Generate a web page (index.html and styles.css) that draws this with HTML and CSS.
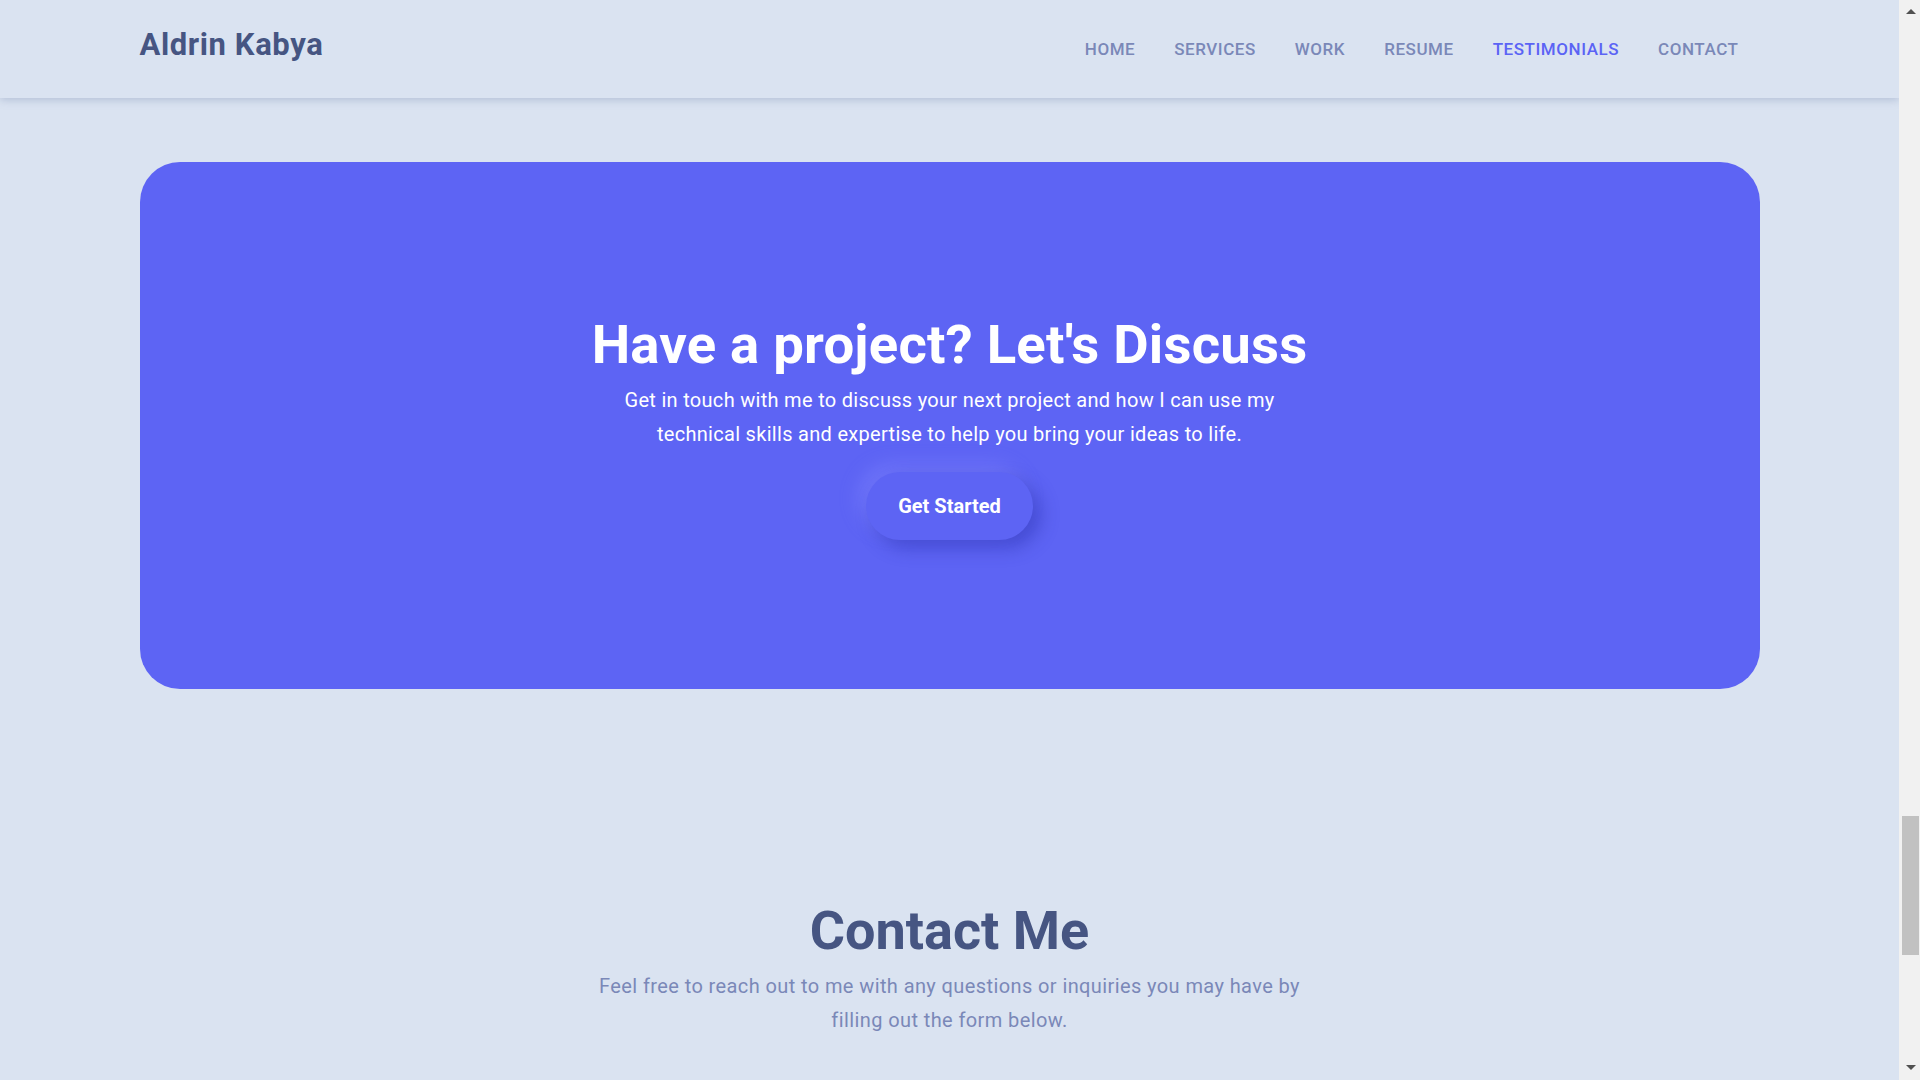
FILE: index.html
```html
<!DOCTYPE html>
<html lang="en">
<head>
<meta charset="utf-8">
<title>Aldrin Kabya</title>
<link rel="stylesheet" href="styles.css">
</head>
<body>
<div class="page">
  <header class="site-header">
    <div class="header-inner">
      <a class="logo" href="#">Aldrin Kabya</a>
      <nav class="nav">
        <a href="#">HOME</a>
        <a href="#">SERVICES</a>
        <a href="#">WORK</a>
        <a href="#">RESUME</a>
        <a href="#" class="active">TESTIMONIALS</a>
        <a href="#">CONTACT</a>
      </nav>
    </div>
  </header>
  <main>
    <section class="cta-section">
      <div class="cta-card">
        <h2 class="cta-title">Have a project? Let's Discuss</h2>
        <p class="cta-text">Get in touch with me to discuss your next project and how I can use my technical skills and expertise to help you bring your ideas to life.</p>
        <a href="#" class="cta-btn">Get Started</a>
      </div>
    </section>
    <section class="contact-section">
      <h2 class="contact-title">Contact Me</h2>
      <p class="contact-text">Feel free to reach out to me with any questions or inquiries you may have by filling out the form below.</p>
    </section>
  </main>
</div>
<div class="scrollbar">
  <svg class="sb-arrow" width="10" height="6" viewBox="0 0 10 6"><path d="M0 6 L5 1 L10 6 Z" fill="#505050"/></svg>
  <div class="sb-track">
    <div class="sb-thumb"></div>
  </div>
  <svg class="sb-arrow" width="10" height="6" viewBox="0 0 10 6"><path d="M0 0 L10 0 L5 5 Z" fill="#505050"/></svg>
</div>
</body>
</html>
```

FILE: styles.css
```css
* {
  box-sizing: border-box;
}
html, body {
  height: 100%;
}
body {
  margin: 0;
  display: flex;
  background: #dae3f1;
  font-family: Roboto, "Liberation Sans", sans-serif;
  color: #465582;
  overflow: hidden;
}
a {
  text-decoration: none;
}
.page {
  flex: 1;
  height: 100vh;
  overflow: hidden;
  background: #dae3f1;
}
.scrollbar {
  width: 21px;
  flex: none;
  height: 100vh;
  background: #f1f1f1;
  display: flex;
  flex-direction: column;
  align-items: center;
  padding: 8px 0 9px 2px;
}
.sb-arrow {
  display: block;
  flex: none;
}
.sb-track {
  flex: 1;
  width: 100%;
  padding-top: 802px;
  display: flex;
  justify-content: center;
}
.sb-thumb {
  width: 17px;
  height: 139px;
  background: #c1c1c1;
}
.site-header {
  position: relative;
  height: 98px;
  background: #dae3f1;
  box-shadow: 0 2px 8px rgba(110, 130, 170, 0.35);
  z-index: 10;
}
.header-inner {
  width: 1620px;
  margin: 0 auto;
  height: 100%;
  display: flex;
  align-items: center;
  justify-content: space-between;
  padding-right: 21px;
}
.logo {
  font-size: 31px;
  font-weight: 700;
  color: #465582;
  margin-top: -10px;
  letter-spacing: 0.6px;
}
.nav {
  display: flex;
  gap: 39px;
}
.nav a {
  font-size: 17px;
  color: #7a88b8;
  font-weight: 500;
  letter-spacing: 0.55px;
}
.nav a.active {
  color: #5b63f5;
}
.cta-section {
  padding-top: 64px;
}
.cta-card {
  width: 1620px;
  height: 527px;
  margin: 0 auto;
  background: #5d64f4;
  border-radius: 40px;
  display: flex;
  flex-direction: column;
  align-items: center;
  justify-content: center;
  text-align: center;
  color: #fff;
}
.cta-title {
  font-size: 54.5px;
  line-height: 67px;
  font-weight: 700;
  margin: 0;
  letter-spacing: 0.2px;
}
.cta-text {
  font-size: 20px;
  line-height: 34px;
  max-width: 670px;
  margin: 5px 0 21px;
  letter-spacing: 0.3px;
}
.cta-btn {
  display: inline-flex;
  align-items: center;
  justify-content: center;
  width: 167px;
  height: 68px;
  border-radius: 34px;
  background: #5d64f4;
  color: #fff;
  font-size: 20px;
  font-weight: 700;
  box-shadow: 8px 8px 18px rgba(40, 46, 170, 0.45), -8px -8px 18px rgba(130, 136, 255, 0.45);
}
.contact-section {
  text-align: center;
  padding-top: 208px;
}
.contact-title {
  font-size: 54px;
  line-height: 67px;
  font-weight: 700;
  margin: 0;
  color: #465582;
}
.contact-text {
  font-size: 20px;
  line-height: 34px;
  max-width: 720px;
  margin: 5px auto 0;
  color: #7a88b8;
  letter-spacing: 0.4px;
}
```
